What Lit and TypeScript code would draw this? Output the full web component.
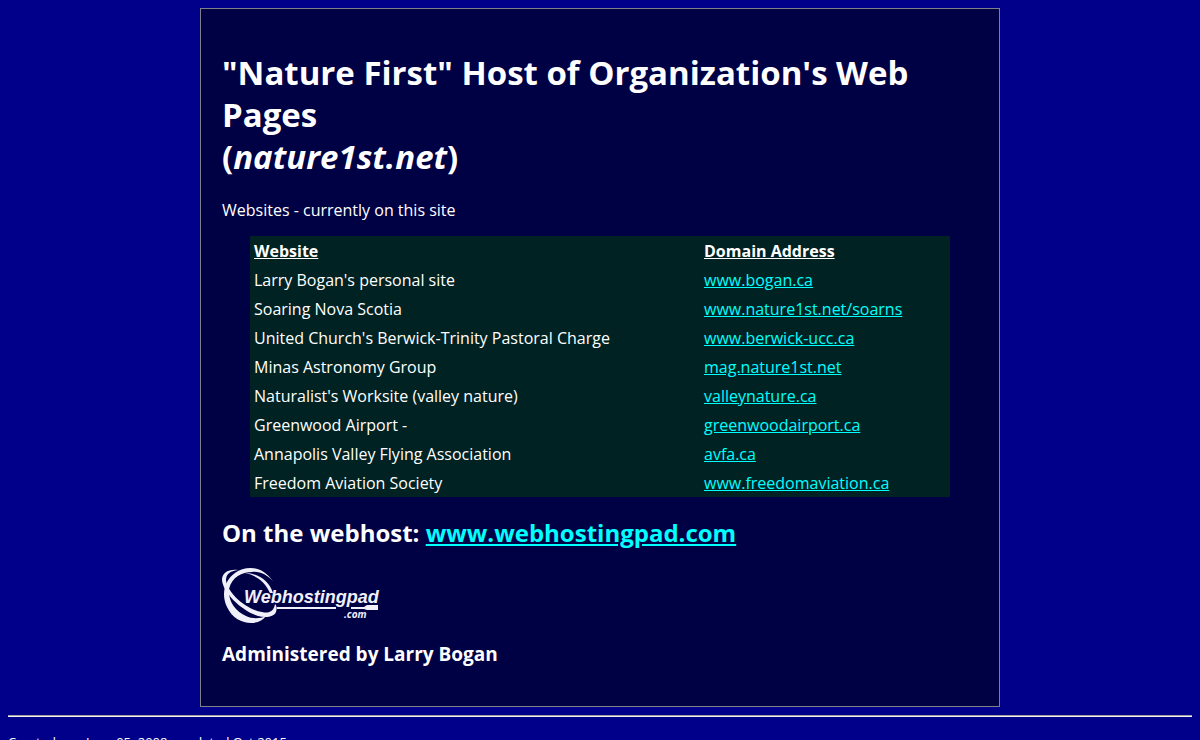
import { LitElement, html, css } from "lit";
import { customElement } from "lit/decorators.js";

interface Site {
  name: string;
  domain: string;
}

const SITES: Site[] = [
  { name: "Larry Bogan's personal site", domain: "www.bogan.ca" },
  { name: "Soaring Nova Scotia", domain: "www.nature1st.net/soarns" },
  { name: "United Church's Berwick-Trinity Pastoral Charge", domain: "www.berwick-ucc.ca" },
  { name: "Minas Astronomy Group", domain: "mag.nature1st.net" },
  { name: "Naturalist's Worksite (valley nature)", domain: "valleynature.ca" },
  { name: "Greenwood Airport -", domain: "greenwoodairport.ca" },
  { name: "Annapolis Valley Flying Association", domain: "avfa.ca" },
  { name: "Freedom Aviation Society", domain: "www.freedomaviation.ca" },
];

@customElement("host-logo")
export class HostLogo extends LitElement {
  static styles = css`
    :host { display: block; }
    .logo { display: block; width: 160px; height: 56px; }
    .word { font: italic bold 18px "Liberation Sans", sans-serif; }
    .com { font: italic bold 10px "Open Sans", sans-serif; }
  `;

  render() {
    return html`
      <svg class="logo" viewBox="0 0 160 56" fill="#f0f0fa" role="img" aria-label="Webhostingpad.com">
        <path d="M51 13C44 4 37 0 29 0C16 0 8 8 5 14C1 21 1 31 5 39C10 50 20 55 29 55C36 55 41 52 44 48C38 51 30 51 24 48C13 43 6 33 7 21C10 9 20 4 30 4C38 3 45 7 51 13Z" />
        <path d="M16 2C6 1 0 5 0 12C1 25 20 43 36 48C44 50 52 49 54 44C55 41 55 38 53 36C52 43 47 46 40 44C25 42 5 25 4 12C4 6 8 3 16 2Z" />
        <path d="M23 5C35 5 47 12 51 25L48 25C43 14 34 7 23 5Z" />
        <text class="word" x="22" y="35">Webhostingpad</text>
        <path d="M55 39H114V41H55ZM129 39H142L145 37H156V42H145L142 41H129Z" />
        <text class="com" x="122" y="50">.com</text>
      </svg>
    `;
  }
}

@customElement("app-root")
export class AppRoot extends LitElement {
  static styles = css`
    :host {
      display: block;
      box-sizing: border-box;
      min-height: 100vh;
      padding: 8px;
      background: #00008b;
      color: #fff;
      font: 16px/23px "Open Sans", "Noto Sans", sans-serif;
    }
    .panel {
      box-sizing: border-box;
      max-width: 800px;
      margin: 0 auto;
      padding: 21px;
      border: 1px solid #80808a;
      background: #000045;
    }
    h1 { margin: 22px 0 21px; font-size: 33px; line-height: 42px; }
    h2 { margin: 20px 0 19px; font-size: 24px; line-height: 32px; }
    h3 { margin: 18px 0; font-size: 19px; line-height: 25px; }
    p { margin: 14px 0; }
    a { color: #00ffff; }
    .sites {
      width: 700px;
      max-width: 100%;
      margin: 0 auto;
      border-spacing: 0;
      background: #002222;
    }
    .sites th, .sites td { padding: 4px 4px 2px; text-align: left; }
    .sites th { text-decoration: underline; }
    .name { width: 442px; }
    hr {
      margin: 8px 0;
      border: 0;
      border-top: 1px solid #a0a0a0;
      border-bottom: 1px solid #f0f0f0;
    }
    .footer { margin: 16px 0; font-size: 13px; line-height: 18px; }
  `;

  render() {
    return html`
      <main class="panel">
        <h1>"Nature First" Host of Organization's Web Pages<br />(<em>nature1st.net</em>)</h1>
        <p>Websites - currently on this site</p>
        <table class="sites">
          <thead>
            <tr><th class="name" scope="col">Website</th><th scope="col">Domain Address</th></tr>
          </thead>
          <tbody>
            ${SITES.map(
              (site) => html`<tr><td>${site.name}</td><td><a href="http://${site.domain}">${site.domain}</a></td></tr>`
            )}
          </tbody>
        </table>
        <h2>On the webhost: <a href="http://www.webhostingpad.com">www.webhostingpad.com</a></h2>
        <host-logo></host-logo>
        <h3>Administered by Larry Bogan</h3>
      </main>
      <hr />
      <p class="footer">Created on - June 05, 2008 - updated Oct 2015</p>
    `;
  }
}
